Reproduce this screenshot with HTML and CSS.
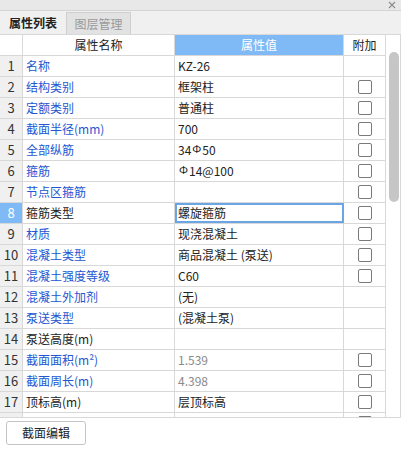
FILE: index.html
```html
<!DOCTYPE html>
<html>
<head>
<meta charset="utf-8">
<link rel="stylesheet" href="styles.css">
</head>
<body>
<div class="panel">
  <div class="titlebar"><svg class="close" width="8" height="8" viewBox="0 0 8 8"><path d="M1 1L7 7M7 1L1 7" stroke="#8a8a8a" stroke-width="1.1" fill="none"/></svg></div>
  <div class="tabs">
    <div class="tab active">属性列表</div>
    <div class="tab">图层管理</div>
  </div>
  <div class="gridwrap">
    <div class="grid">
      <div class="row head">
        <div class="c num"></div>
        <div class="c name center">属性名称</div>
        <div class="c val hval">属性值</div>
        <div class="c ext center">附加</div>
      </div>
      <div class="row"><div class="c num">1</div><div class="c name link">名称</div><div class="c val">KZ-26</div><div class="c ext"></div></div>
      <div class="row"><div class="c num">2</div><div class="c name link">结构类别</div><div class="c val">框架柱</div><div class="c ext"><span class="cb"></span></div></div>
      <div class="row"><div class="c num">3</div><div class="c name link">定额类别</div><div class="c val">普通柱</div><div class="c ext"><span class="cb"></span></div></div>
      <div class="row"><div class="c num">4</div><div class="c name link">截面半径(mm)</div><div class="c val">700</div><div class="c ext"><span class="cb"></span></div></div>
      <div class="row"><div class="c num">5</div><div class="c name link">全部纵筋</div><div class="c val">34<span class="rebar">Ф</span>50</div><div class="c ext"><span class="cb"></span></div></div>
      <div class="row"><div class="c num">6</div><div class="c name link">箍筋</div><div class="c val"><span class="rebar">Ф</span>14@100</div><div class="c ext"><span class="cb"></span></div></div>
      <div class="row"><div class="c num">7</div><div class="c name link">节点区箍筋</div><div class="c val"></div><div class="c ext"><span class="cb"></span></div></div>
      <div class="row"><div class="c num sel">8</div><div class="c name">箍筋类型</div><div class="c val focus">螺旋箍筋</div><div class="c ext"><span class="cb"></span></div></div>
      <div class="row"><div class="c num">9</div><div class="c name link">材质</div><div class="c val">现浇混凝土</div><div class="c ext"><span class="cb"></span></div></div>
      <div class="row"><div class="c num">10</div><div class="c name link">混凝土类型</div><div class="c val">商品混凝土 (泵送)</div><div class="c ext"><span class="cb"></span></div></div>
      <div class="row"><div class="c num">11</div><div class="c name link">混凝土强度等级</div><div class="c val">C60</div><div class="c ext"><span class="cb"></span></div></div>
      <div class="row"><div class="c num">12</div><div class="c name link">混凝土外加剂</div><div class="c val">(无)</div><div class="c ext"></div></div>
      <div class="row"><div class="c num">13</div><div class="c name link">泵送类型</div><div class="c val">(混凝土泵)</div><div class="c ext"></div></div>
      <div class="row"><div class="c num">14</div><div class="c name">泵送高度(m)</div><div class="c val"></div><div class="c ext"></div></div>
      <div class="row"><div class="c num">15</div><div class="c name link">截面面积(m²)</div><div class="c val gray">1.539</div><div class="c ext"><span class="cb"></span></div></div>
      <div class="row"><div class="c num">16</div><div class="c name link">截面周长(m)</div><div class="c val gray">4.398</div><div class="c ext"><span class="cb"></span></div></div>
      <div class="row"><div class="c num">17</div><div class="c name">顶标高(m)</div><div class="c val">层顶标高</div><div class="c ext"><span class="cb"></span></div></div>
      <div class="row"><div class="c num"></div><div class="c name"></div><div class="c val"></div><div class="c ext"><span class="cb"></span></div></div>
    </div>
    <div class="scroll"><div class="thumb"></div></div>
  </div>
  <div class="footer">
    <button class="btn">截面编辑</button>
  </div>
</div>
</body>
</html>
```
FILE: styles.css
```css
* { box-sizing: border-box; }
html, body { margin: 0; padding: 0; background: #fff; }
body {
  font-family: "Noto Sans CJK SC", "Noto Sans", sans-serif;
  font-size: 12px;
  color: #222;
}
.panel { width: 401px; height: 449px; display: flex; flex-direction: column; }
.titlebar {
  height: 11px;
  background: #e8e8e8;
  border-bottom: 1px solid #d4d4d4;
  display: flex;
  justify-content: flex-end;
  align-items: center;
  padding-right: 5px;
}
.close { display: block; }
.tabs {
  height: 23px;
  background: #f0f0f0;
  display: flex;
  align-items: flex-end;
}
.tab {
  width: 65px;
  height: 22px;
  line-height: 21px;
  text-align: center;
  font-size: 12px;
  color: #999;
  background: #e2e2e2;
  border: 1px solid #cfcfcf;
  border-bottom: none;
}
.tab.active {
  background: #f0f0f0;
  color: #222;
  font-weight: 600;
  border: none;
  width: 66px;
}
.gridwrap {
  height: 384px;
  border-top: 1px solid #d8d8d8;
  border-bottom: 1px solid #d8d8d8;
  border-right: 1px solid #d8d8d8;
  display: flex;
  overflow: hidden;
}
.grid { width: 386px; height: 382px; overflow: hidden; }
.row { display: flex; height: 21px; border-bottom: 1px solid #d8d8d8; }
.c {
  border-right: 1px solid #d8d8d8;
  height: 20px;
  line-height: 20px;
  white-space: nowrap;
  overflow: hidden;
}
.num { width: 23px; background: #f0f0f0; text-align: center; color: #333; font-size: 13px; }
.head .num { background: #fff; }
.name { width: 152px; padding-left: 3px; }
.val { width: 169px; padding-left: 3px; }
.ext { width: 42px; display: flex; align-items: center; justify-content: center; }
.center { text-align: center; padding-left: 0; }
.hval { background: #80baf6; color: #fff; text-align: center; padding-left: 0; }
.link { color: #2456d2; }
.gray { color: #8a8a8a; }
.sel { background: #80baf6; color: #fff; }
.focus { border: 2px solid #6aa6e6; line-height: 16px; padding-left: 1px; }
.rebar { font-size: 11px; position: relative; top: -2px; margin: 0 1px; }
.cb {
  width: 14px;
  height: 14px;
  border: 1px solid #7a7a7a;
  border-radius: 2px;
  background: #fff;
  flex: none;
}
.scroll { width: 14px; padding-top: 17px; padding-left: 3px; }
.thumb { width: 10px; height: 150px; background: #c6c6c6; border-radius: 5px; }
.footer { padding: 3px 0 0 6px; }
.btn {
  display: block;
  width: 80px;
  height: 24px;
  line-height: 22px;
  font-family: "Noto Sans CJK SC", sans-serif;
  font-size: 12px;
  color: #222;
  background: #fff;
  border: 1px solid #c4c4c4;
  border-radius: 3px;
  padding: 0;
}
```
